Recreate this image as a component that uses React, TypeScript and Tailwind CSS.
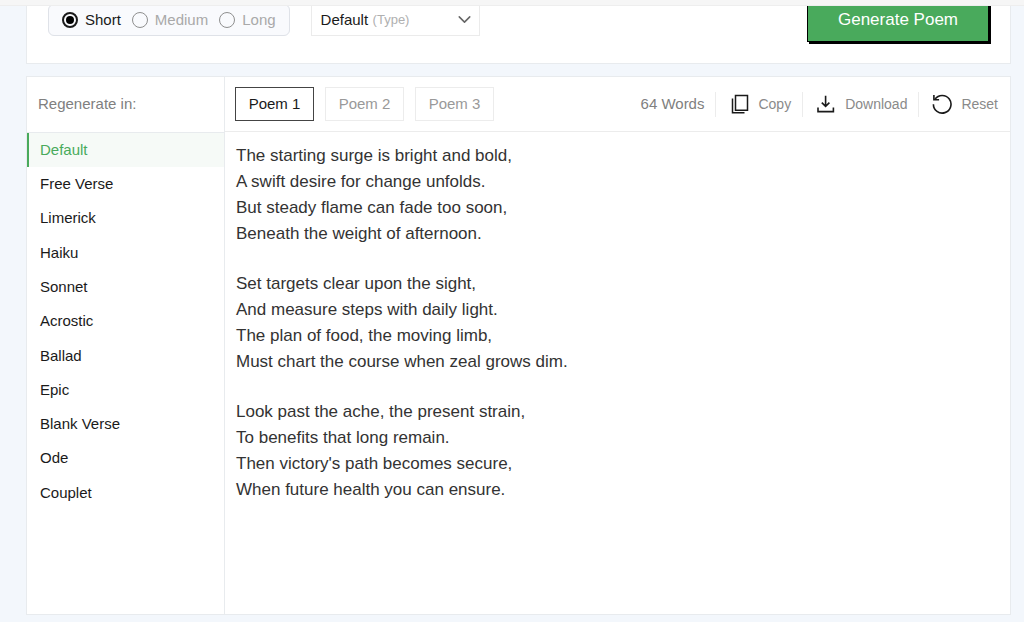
import { useState } from 'react';
import type { ReactNode } from 'react';
import { ChevronDown } from 'lucide-react';

const lengths = ['Short', 'Medium', 'Long'];

const forms = [
  'Default',
  'Free Verse',
  'Limerick',
  'Haiku',
  'Sonnet',
  'Acrostic',
  'Ballad',
  'Epic',
  'Blank Verse',
  'Ode',
  'Couplet',
];

const tabs = ['Poem 1', 'Poem 2', 'Poem 3'];

const stanzas = [
  [
    'The starting surge is bright and bold,',
    'A swift desire for change unfolds.',
    'But steady flame can fade too soon,',
    'Beneath the weight of afternoon.',
  ],
  [
    'Set targets clear upon the sight,',
    'And measure steps with daily light.',
    'The plan of food, the moving limb,',
    'Must chart the course when zeal grows dim.',
  ],
  [
    'Look past the ache, the present strain,',
    'To benefits that long remain.',
    "Then victory's path becomes secure,",
    'When future health you can ensure.',
  ],
];

function CopyIcon() {
  return (
    <svg width="20" height="20" viewBox="0 0 20 20" fill="none" stroke="#1a1a1a" strokeWidth="1.5" aria-hidden="true">
      <path d="M6.5 1.5h12v14.8h-12z" />
      <path d="M3.5 4.6v14.2h12" />
    </svg>
  );
}

function DownloadIcon() {
  return (
    <svg width="20" height="20" viewBox="0 0 20 20" fill="none" stroke="#1a1a1a" strokeWidth="1.6" aria-hidden="true">
      <path d="M9.6 1.8v10.4M5.8 8.6l3.8 3.8 3.8-3.8" />
      <path d="M2 13.4v4.2h15.4v-4.2" />
    </svg>
  );
}

function ResetIcon() {
  return (
    <svg width="20" height="20" viewBox="0 0 20 20" fill="none" stroke="#1a1a1a" strokeWidth="1.6" aria-hidden="true">
      <path d="M3 5.2A8.8 8.8 0 1 1 1.4 10.2" />
      <path d="M1.9 1v4.8h5.2" />
    </svg>
  );
}

function ToolButton({ icon, label }: { icon: ReactNode; label: string }) {
  return (
    <button
      type="button"
      className="flex h-[25px] items-center gap-[9px] border-l border-[#ececec] pr-[11px] pl-[13px] text-[14px] text-[#8a8a8a]"
    >
      {icon}
      {label}
    </button>
  );
}

export default function App() {
  const [length, setLength] = useState('Short');
  const [form, setForm] = useState('Default');
  const [tab, setTab] = useState('Poem 1');

  return (
    <div className="flex min-h-screen flex-col bg-[#f3f7fc] font-['Liberation_Sans',Arial,sans-serif] text-[15px] text-[#1a1a1a]">
      <header className="h-1.5 border-b border-[#eeeeee] bg-[#f6f6f6]" />

      <main className="flex flex-1 flex-col gap-3 pr-[13px] pb-[7px] pl-[26px]">
        <section className="overflow-hidden border-x border-b border-[#e8ebee] bg-white px-[21px] pb-[21px]">
          <div className="-mt-2 flex h-11 items-center">
            <fieldset className="flex h-8 items-center gap-[11px] rounded-md border border-[#dfe2e8] bg-[#f9fafd] px-[13px]">
              {lengths.map((item) => (
                <label key={item} className={`flex items-center gap-[7px] ${length === item ? 'text-[#1a1a1a]' : 'text-[#a9a9a9]'}`}>
                  <input
                    type="radio"
                    name="length"
                    checked={length === item}
                    onChange={() => setLength(item)}
                    className="size-4 appearance-none rounded-full border border-[#8f8f8f] bg-clip-content p-0.5 checked:border-2 checked:border-[#1a1a1a] checked:bg-black"
                  />
                  {item}
                </label>
              ))}
            </fieldset>

            <div className="relative ml-[21px]">
              <select
                id="poem-type"
                value={form}
                onChange={(e) => setForm(e.target.value)}
                className="block h-8 w-[169px] appearance-none border border-[#ebebeb] bg-white pl-[9px]"
              >
                {forms.map((item) => (
                  <option key={item}>{item}</option>
                ))}
              </select>
              {form === 'Default' && (
                <label htmlFor="poem-type" className="pointer-events-none absolute top-1.5 left-[62px] text-[13px] text-[#b0b0b0]">
                  (Type)
                </label>
              )}
              <ChevronDown size={21} strokeWidth={1.75} color="#666" className="pointer-events-none absolute top-[5px] right-[5px]" />
            </div>

            <button
              type="button"
              className="ml-auto h-11 w-[182px] border border-black bg-[#49aa5c] text-[17px] text-white shadow-[2px_2px_0_#000]"
            >
              Generate Poem
            </button>
          </div>
        </section>

        {/* Result */}
        <section className="flex flex-1 border border-[#e8ebee] bg-white">
          <aside className="w-[198px] shrink-0 border-r border-[#e8ebee]">
            <h2 className="flex h-14 items-center border-b border-[#e8ebee] pl-[11px] text-[#808080]">Regenerate in:</h2>
            <ul className="grid min-h-[377px] auto-rows-fr">
              {forms.map((item) => (
                <li key={item} className="flex">
                  <button
                    type="button"
                    onClick={() => setForm(item)}
                    className={`w-full border-l-2 pl-[11px] text-left ${
                      form === item ? 'border-[#49aa5c] bg-[#f6faf7] text-[#49aa5c]' : 'border-transparent'
                    }`}
                  >
                    {item}
                  </button>
                </li>
              ))}
            </ul>
          </aside>

          <div className="flex-1">
            <div className="flex h-[55px] items-center border-b border-[#ececec] pr-px pl-[10px]">
              <div className="flex gap-[11px]">
                {tabs.map((item) => (
                  <button
                    key={item}
                    type="button"
                    onClick={() => setTab(item)}
                    className={`h-[34px] w-[79px] border ${
                      tab === item ? 'border-[#444] text-[#1a1a1a]' : 'border-[#ececec] text-[#999]'
                    }`}
                  >
                    {item}
                  </button>
                ))}
              </div>
              <span className="mr-[11px] ml-auto text-[#808080]">64 Words</span>
              <ToolButton icon={<CopyIcon />} label="Copy" />
              <ToolButton icon={<DownloadIcon />} label="Download" />
              <ToolButton icon={<ResetIcon />} label="Reset" />
            </div>

            <div className="flex flex-col gap-6 px-[11px] pt-[11px] text-[17px] leading-[26px] text-[#333]">
              {stanzas.map((lines) => (
                <p key={lines[0]}>
                  {lines.map((line) => (
                    <span key={line} className="block">
                      {line}
                    </span>
                  ))}
                </p>
              ))}
            </div>
          </div>
        </section>
      </main>
    </div>
  );
}
